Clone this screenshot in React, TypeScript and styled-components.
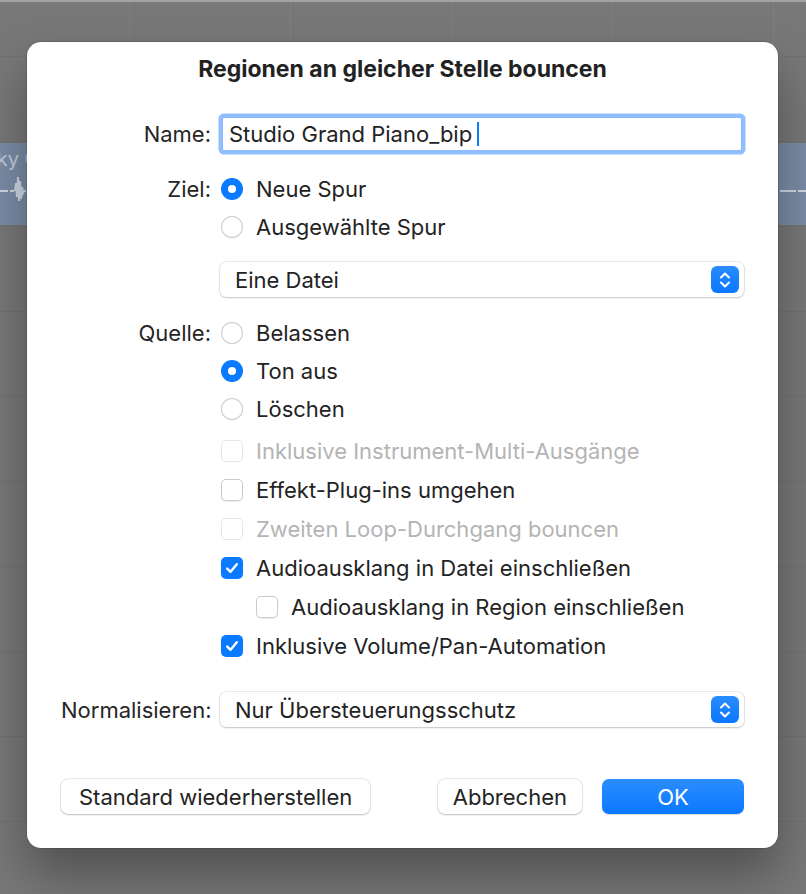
import * as React from 'react';
import styled, { createGlobalStyle } from 'styled-components';

const GlobalStyle = createGlobalStyle`
  html, body {
    margin: 0;
    padding: 0;
    background: #787878;
  }
  body {
    font-family: Inter, "Noto Sans", "Liberation Sans", sans-serif;
    -webkit-font-smoothing: antialiased;
  }
`;

const FONT = 'Inter, "Noto Sans", "Liberation Sans", sans-serif';
const BLUE = '#0a7bff';

const App: React.FC = () => (
  <Page>
    <GlobalStyle />
    <Arrange>
      <TopStrip />
      <Lane height={55} />
      <Lane height={85} />
      <Lane height={85}>
        <RegionBlock>
          <RegionName>Funky Guitar</RegionName>
          <Wave viewBox="0 0 806 40" preserveAspectRatio="none">
            <path
              d="M0 20 H8 M10 20 H14 M15 20 L16 12 L17 26 L18 6 L19 30 L20 10 L21 28 L22 16 L23 22 L24 20 H26 M780 20 H796 M798 20 H806"
              stroke="#cfd8e4"
              strokeWidth="2"
              fill="none"
            />
          </Wave>
        </RegionBlock>
      </Lane>
      <Lane height={85} />
      <Lane height={85} />
      <Lane height={85} />
      <Lane height={85} />
      <Lane height={85} />
      <Lane height={85} />
      <Lane height={85} />
    </Arrange>

    <Dialog>
      <Title>Regionen an gleicher Stelle bouncen</Title>

      <Form>
        <FieldRow top={33}>
          <Label>Name:</Label>
          <TextField>
            <span>Studio Grand Piano_bip</span>
            <Caret />
          </TextField>
        </FieldRow>

        <FieldRow top={17}>
          <Label>Ziel:</Label>
          <Options>
            <Option>
              <Radio checked />
              <OptionText>Neue Spur</OptionText>
            </Option>
            <Option>
              <Radio />
              <OptionText>Ausgewählte Spur</OptionText>
            </Option>
          </Options>
        </FieldRow>

        <FieldRow top={15}>
          <Label />
          <Select>
            <SelectText>Eine Datei</SelectText>
            <Stepper>
              <Chevrons />
            </Stepper>
          </Select>
        </FieldRow>

        <FieldRow top={15}>
          <Label>Quelle:</Label>
          <Options>
            <Option>
              <Radio />
              <OptionText>Belassen</OptionText>
            </Option>
            <Option>
              <Radio checked />
              <OptionText>Ton aus</OptionText>
            </Option>
            <Option>
              <Radio />
              <OptionText>Löschen</OptionText>
            </Option>
            <CheckRow first>
              <Checkbox disabled />
              <OptionText disabled>Inklusive Instrument-Multi-Ausgänge</OptionText>
            </CheckRow>
            <CheckRow>
              <Checkbox />
              <OptionText>Effekt-Plug-ins umgehen</OptionText>
            </CheckRow>
            <CheckRow>
              <Checkbox disabled />
              <OptionText disabled>Zweiten Loop-Durchgang bouncen</OptionText>
            </CheckRow>
            <CheckRow>
              <Checkbox checked />
              <OptionText>Audioausklang in Datei einschließen</OptionText>
            </CheckRow>
            <CheckRow indent>
              <Checkbox />
              <OptionText>Audioausklang in Region einschließen</OptionText>
            </CheckRow>
            <CheckRow>
              <Checkbox checked />
              <OptionText>Inklusive Volume/Pan-Automation</OptionText>
            </CheckRow>
          </Options>
        </FieldRow>

        <FieldRow top={26}>
          <Label>Normalisieren:</Label>
          <Select>
            <SelectText>Nur Übersteuerungsschutz</SelectText>
            <Stepper>
              <Chevrons />
            </Stepper>
          </Select>
        </FieldRow>
      </Form>

      <Footer>
        <Button wide>Standard wiederherstellen</Button>
        <Spacer />
        <Button>Abbrechen</Button>
        <Button primary>OK</Button>
      </Footer>
    </Dialog>
  </Page>
);

const Radio: React.FC<{ checked?: boolean }> = ({ checked }) => (
  <RadioCircle checked={checked}>{checked && <RadioDot />}</RadioCircle>
);

const Checkbox: React.FC<{ checked?: boolean; disabled?: boolean }> = ({ checked, disabled }) => (
  <CheckBoxSquare checked={checked} disabled={disabled}>
    {checked && (
      <svg width="16" height="16" viewBox="0 0 16 16">
        <path
          d="M3.2 8.6 L6.6 11.8 L12.8 4.2"
          stroke="#fff"
          strokeWidth="2.4"
          strokeLinecap="round"
          strokeLinejoin="round"
          fill="none"
        />
      </svg>
    )}
  </CheckBoxSquare>
);

const Chevrons: React.FC = () => (
  <svg width="14" height="20" viewBox="0 0 14 20">
    <path
      d="M3 7.5 L7 3.5 L11 7.5 M3 12.5 L7 16.5 L11 12.5"
      stroke="#fff"
      strokeWidth="2"
      strokeLinecap="round"
      strokeLinejoin="round"
      fill="none"
    />
  </svg>
);

const Page = styled.div`
  position: relative;
  width: 806px;
  height: 894px;
  overflow: hidden;
  background: #787878;
`;

const Arrange = styled.div`
  display: flex;
  flex-direction: column;
`;

const TopStrip = styled.div`
  height: 2px;
  background: #a2a2a2;
`;

const Lane = styled.div<{ height: number }>`
  height: ${p => p.height}px;
  flex: 0 0 auto;
  box-sizing: border-box;
  border-bottom: 1px solid #717171;
  display: flex;
  flex-direction: column;
  background-image: repeating-linear-gradient(
    to right,
    transparent 0,
    transparent 129px,
    rgba(255, 255, 255, 0.05) 129px,
    rgba(255, 255, 255, 0.05) 130px,
    transparent 130px,
    transparent 161px
  );
`;

const RegionBlock = styled.div`
  flex: 1;
  margin: 1px 0 1px;
  background: #7a8da7;
  display: flex;
  flex-direction: column;
  overflow: hidden;
`;

const RegionName = styled.div`
  font-family: ${FONT};
  font-size: 20px;
  color: #c4ceda;
  padding: 4px 0 0;
  margin-left: -38px;
  white-space: nowrap;
`;

const Wave = styled.svg`
  width: 806px;
  height: 40px;
`;

const Dialog = styled.div`
  position: absolute;
  top: 42px;
  left: 27px;
  width: 751px;
  height: 806px;
  box-sizing: border-box;
  padding: 14px 34px 34px;
  background: #fff;
  border-radius: 14px;
  box-shadow: 0 0 0 0.5px rgba(0, 0, 0, 0.25), 0 26px 50px rgba(0, 0, 0, 0.34);
  display: flex;
  flex-direction: column;
  font-family: ${FONT};
  color: #232323;
`;

const Title = styled.div`
  height: 26px;
  line-height: 26px;
  text-align: center;
  font-size: 23px;
  font-weight: 700;
  color: #222;
`;

const Form = styled.div`
  display: flex;
  flex-direction: column;
`;

const FieldRow = styled.div<{ top: number }>`
  display: grid;
  grid-template-columns: 150px 1fr;
  column-gap: 9px;
  align-items: start;
  margin-top: ${p => p.top}px;
`;

const Label = styled.div`
  text-align: right;
  font-size: 22px;
  line-height: 38px;
  height: 38px;
  color: #262626;
  white-space: nowrap;
`;

const TextField = styled.div`
  height: 34px;
  margin: 2px 2px 0 2px;
  box-sizing: border-box;
  border: 1px solid #8fb6ff;
  box-shadow: 0 0 0 3.5px rgba(10, 110, 255, 0.45);
  border-radius: 2px;
  background: #fff;
  display: flex;
  align-items: center;
  padding-left: 6px;
  font-size: 22px;
  color: #222;
`;

const Caret = styled.span`
  width: 2px;
  height: 24px;
  margin-left: 5px;
  background: ${BLUE};
`;

const Options = styled.div`
  display: flex;
  flex-direction: column;
`;

const Option = styled.div`
  height: 38px;
  display: flex;
  align-items: center;
  gap: 13px;
  padding-left: 1px;
`;

const CheckRow = styled.div<{ first?: boolean; indent?: boolean }>`
  height: 39px;
  display: flex;
  align-items: center;
  gap: 13px;
  padding-left: ${p => (p.indent ? 36 : 1)}px;
  margin-top: ${p => (p.first ? 3 : 0)}px;
`;

const OptionText = styled.span<{ disabled?: boolean }>`
  font-size: 22px;
  color: ${p => (p.disabled ? '#b4b4b4' : '#232323')};
  white-space: nowrap;
`;

const RadioCircle = styled.span<{ checked?: boolean }>`
  width: 22px;
  height: 22px;
  box-sizing: border-box;
  border-radius: 50%;
  flex: 0 0 auto;
  display: flex;
  align-items: center;
  justify-content: center;
  background: ${p => (p.checked ? BLUE : '#fff')};
  box-shadow: ${p =>
    p.checked
      ? 'none'
      : 'inset 0 0 0 1px #cdcdcd, 0 0.5px 1px rgba(0,0,0,0.08)'};
`;

const RadioDot = styled.span`
  width: 8px;
  height: 8px;
  border-radius: 50%;
  background: #fff;
`;

const CheckBoxSquare = styled.span<{ checked?: boolean; disabled?: boolean }>`
  width: 22px;
  height: 22px;
  box-sizing: border-box;
  border-radius: 5px;
  flex: 0 0 auto;
  display: flex;
  align-items: center;
  justify-content: center;
  background: ${p => (p.checked ? BLUE : '#fff')};
  box-shadow: ${p =>
    p.checked
      ? 'none'
      : p.disabled
      ? 'inset 0 0 0 1px #e6e6e6'
      : 'inset 0 0 0 1px #cbcbcb, 0 0.5px 1px rgba(0,0,0,0.08)'};
`;

const Select = styled.div`
  height: 35px;
  box-sizing: border-box;
  margin-top: 1px;
  border-radius: 6px;
  background: #fff;
  box-shadow: 0 0 0 0.5px rgba(0, 0, 0, 0.16), 0 1px 2px rgba(0, 0, 0, 0.16);
  display: flex;
  align-items: center;
  padding: 0 5px 0 15px;
`;

const SelectText = styled.span`
  flex: 1;
  font-size: 22px;
  color: #232323;
`;

const Stepper = styled.span`
  width: 28px;
  height: 27px;
  border-radius: 6px;
  background: linear-gradient(#2a8cff, #0a77ff);
  display: flex;
  align-items: center;
  justify-content: center;
`;

const Footer = styled.div`
  margin-top: auto;
  display: flex;
  align-items: center;
  gap: 20px;
`;

const Spacer = styled.div`
  flex: 1;
`;

const Button = styled.button<{ primary?: boolean; wide?: boolean }>`
  height: 35px;
  min-width: 142px;
  padding: 0 ${p => (p.wide ? 18 : 15)}px;
  border: none;
  border-radius: 7px;
  font-family: ${FONT};
  font-size: 22px;
  color: ${p => (p.primary ? '#fff' : '#232323')};
  background: ${p => (p.primary ? 'linear-gradient(#2b8dff, #0a78ff)' : '#fff')};
  box-shadow: ${p =>
    p.primary
      ? '0 0.5px 1px rgba(0,0,0,0.15)'
      : '0 0 0 0.5px rgba(0,0,0,0.16), 0 1px 2px rgba(0,0,0,0.18)'};
`;

export default App;
